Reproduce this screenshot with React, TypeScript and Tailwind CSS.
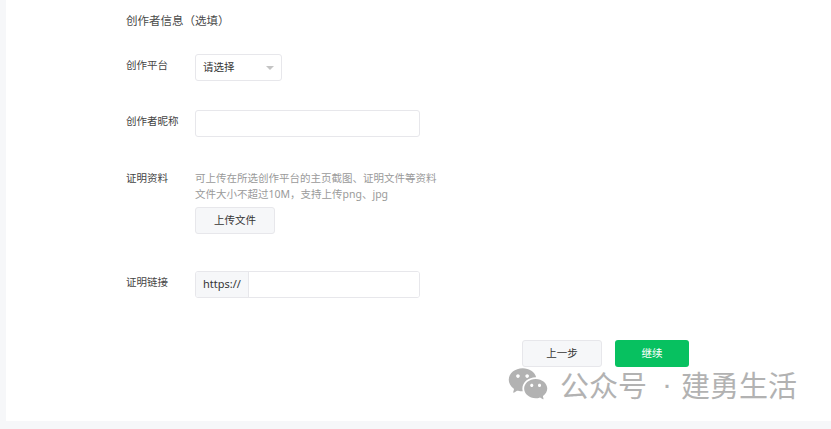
import { RiWechatFill } from "react-icons/ri";

const font = "[font-family:'Noto_Sans_CJK_SC','Liberation_Sans',sans-serif]";

const App = () => {
  return (
    <div className="bg-[#f6f7f9] h-[429px] w-[831px] overflow-hidden pl-[6px] [font-family:'Noto_Sans','Noto_Sans_CJK_SC',sans-serif]">
      <div className="relative bg-white h-[421px] pl-[120px] pt-[13px]">
        <h2 className="text-[11.5px] leading-[16px] text-[#4a4a4a]">创作者信息（选填）</h2>

        <div className="flex mt-[25px]">
          <label className="w-[69px] text-[10.5px] leading-[22px] text-[#444444]">创作平台</label>
          <div className="flex items-center justify-between w-[87px] h-[27px] border border-[#e7e7eb] rounded-[3px] pl-[8px] pr-[7px]">
            <span className="text-[10.5px] -ml-[1px] text-[#353535]">请选择</span>
            <span className="w-0 h-0 border-x-[4px] border-x-transparent border-t-[4px] border-t-[#c4c4c4]" />
          </div>
        </div>

        <div className="flex mt-[29px]">
          <label className="w-[69px] text-[10.5px] leading-[22px] text-[#444444]">创作者昵称</label>
          <input className="w-[225px] h-[27px] border border-[#e7e7eb] rounded-[3px] bg-white" />
        </div>

        <div className="flex mt-[33px]">
          <label className="w-[69px] text-[10.5px] leading-[16px] text-[#444444]">证明资料</label>
          <div>
            <p className="text-[10.5px] leading-[16px] text-[#9a9a9a] w-[250px] whitespace-nowrap">可上传在所选创作平台的主页截图、证明文件等资料</p>
            <p className="text-[10.5px] leading-[16px] text-[#9a9a9a] whitespace-nowrap">文件大小不超过10M，支持上传png、jpg</p>
            <button className="mt-[5px] w-[80px] h-[27px] bg-[#f6f7f9] border border-[#e7e7eb] rounded-[3px] text-[10.5px] text-[#353535]">上传文件</button>
          </div>
        </div>

        <div className="flex mt-[37px]">
          <label className="w-[69px] text-[10.5px] leading-[22px] text-[#444444]">证明链接</label>
          <div className="flex w-[225px] h-[27px] border border-[#e7e7eb] rounded-[3px] overflow-hidden">
            <span className="flex items-center justify-center w-[53px] bg-[#f6f7f9] border-r border-[#e7e7eb] text-[11px] text-[#353535]">https://</span>
            <input className="flex-1 min-w-0 bg-white" />
          </div>
        </div>

        <div className="flex justify-end gap-[13px] mt-[42px] pr-[142px]">
          <button className="w-[80px] h-[27px] bg-[#f6f7f9] border border-[#e7e7eb] rounded-[3px] text-[10.5px] text-[#353535]">上一步</button>
          <button className="w-[74px] h-[27px] bg-[#07c160] rounded-[3px] text-[10.5px] text-white">继续</button>
        </div>

        <div className={`absolute left-[501px] top-[363px] flex items-center text-[#b2b2b2] ${font}`}>
          <RiWechatFill className="w-[42px] h-[42px]" />
          <span className="ml-[11px] text-[29px] leading-[40px] whitespace-nowrap">公众号</span>
          <span className="ml-[15px] mr-[9px] text-[30px] leading-[40px] [font-family:'Liberation_Sans',sans-serif]">·</span>
          <span className="text-[29px] leading-[40px] whitespace-nowrap">建勇生活</span>
        </div>
      </div>
    </div>
  );
};

export default App;
